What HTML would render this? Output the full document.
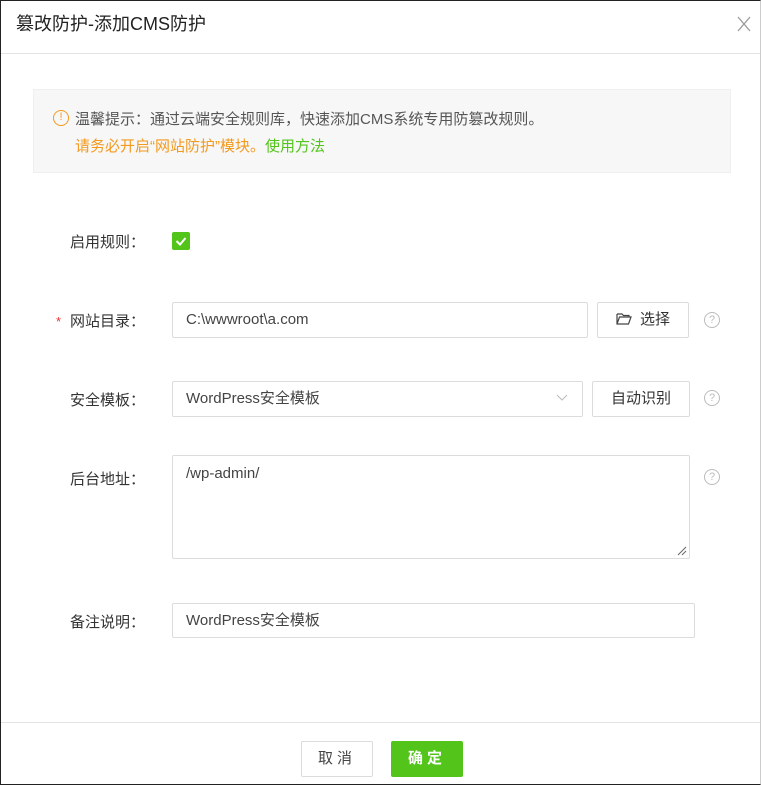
<!DOCTYPE html>
<html><head><meta charset="utf-8"><style>
*{box-sizing:border-box;margin:0;padding:0}
body{width:761px;height:785px;background:#fff;font-family:"Liberation Sans","Noto Sans CJK SC",sans-serif;position:relative;overflow:hidden;color:#333}
.frame{position:absolute;left:0;top:0;width:761px;height:785px;border:1px solid #222;border-right:1px solid #ccc}
.abs{position:absolute}
.title{left:16px;top:10px;font-size:18px;color:#222}
.hd{left:1px;right:1px;top:53px;border-top:1px solid #e4e4e4}
.notice{left:33px;top:89px;width:698px;height:84px;background:#f7f7f7;border:1px solid #efefef}
.lbl{font-size:15px;color:#333}
.box{border:1px solid #dcdcdc;border-radius:2px;background:#fff;font-size:15px;color:#444;padding-left:13px;line-height:34px}
.btn{border:1px solid #dcdcdc;border-radius:2px;background:#fff;font-size:15px;color:#333;text-align:center;line-height:34px}
.help{width:16px;height:16px;border:1px solid #bbb;border-radius:50%;font-size:11px;color:#bbb;text-align:center;line-height:14px}
</style></head><body>
<div class="frame"></div>
<div class="abs title">篡改防护-添加CMS防护</div>
<svg class="abs" style="left:737px;top:16px" width="14" height="16"><path d="M1 1L13 15M13 1L1 15" stroke="#999" stroke-width="1.3"/></svg>
<div class="abs hd"></div>
<div class="abs notice"></div>
<div class="abs" style="left:53px;top:110px;width:16px;height:16px;border:1.5px solid #f39a1d;border-radius:50%;color:#f39a1d;font-size:11px;text-align:center;line-height:13px">!</div>
<div class="abs" style="left:75px;top:108px;font-size:15px;color:#555">温馨提示：通过云端安全规则库，快速添加CMS系统专用防篡改规则。</div>
<div class="abs" style="left:75px;top:135px;font-size:15px;color:#f39a1d">请务必开启“网站防护”模块。<span style="color:#52c41a">使用方法</span></div>

<div class="abs lbl" style="left:70px;top:231px">启用规则：</div>
<div class="abs" style="left:172px;top:232px;width:18px;height:18px;background:#52c41a;border-radius:2px"><svg width="18" height="18"><path d="M4.5 9L8 12.5L13.5 6" stroke="#fff" stroke-width="2" fill="none"/></svg></div>

<div class="abs" style="left:56px;top:314px;color:#e33;font-size:13px">*</div>
<div class="abs lbl" style="left:70px;top:310px">网站目录：</div>
<div class="abs box" style="left:172px;top:302px;width:416px;height:36px">C:\wwwroot\a.com</div>
<div class="abs btn" style="left:597px;top:302px;width:92px;height:36px"><svg width="16" height="13" style="vertical-align:-1px;margin-right:8px"><path d="M1 2H6L7.5 3.5H13V5M1 2V12H12.5L15 5H3.5L1 12" stroke="#444" stroke-width="1.2" fill="none"/></svg>选择</div>
<div class="abs help" style="left:704px;top:312px">?</div>

<div class="abs lbl" style="left:70px;top:389px">安全模板：</div>
<div class="abs box" style="left:172px;top:381px;width:411px;height:36px">WordPress安全模板</div>
<svg class="abs" style="left:556px;top:394px" width="12" height="8"><path d="M1 1L6 6L11 1" stroke="#bbb" fill="none"/></svg>
<div class="abs btn" style="left:592px;top:381px;width:98px;height:36px">自动识别</div>
<div class="abs help" style="left:704px;top:390px">?</div>

<div class="abs lbl" style="left:70px;top:468px">后台地址：</div>
<div class="abs box" style="left:172px;top:455px;width:518px;height:104px;line-height:20px;padding-top:8px">/wp-admin/</div>
<svg class="abs" style="left:677px;top:546px" width="10" height="10"><path d="M9 1L1 9M9 5L5 9" stroke="#666"/></svg>
<div class="abs help" style="left:704px;top:469px">?</div>

<div class="abs lbl" style="left:70px;top:611px">备注说明：</div>
<div class="abs box" style="left:172px;top:603px;width:523px;height:35px">WordPress安全模板</div>

<div class="abs" style="left:1px;right:1px;top:722px;border-top:1px solid #e4e4e4"></div>
<div class="abs btn" style="left:301px;top:741px;width:72px;height:36px;letter-spacing:4px;color:#444">取消</div>
<div class="abs" style="left:391px;top:741px;width:72px;height:36px;background:#52c41a;border-radius:2px;color:#fff;font-size:15px;font-weight:bold;text-align:center;line-height:36px;letter-spacing:4px">确定</div>
</body></html>
